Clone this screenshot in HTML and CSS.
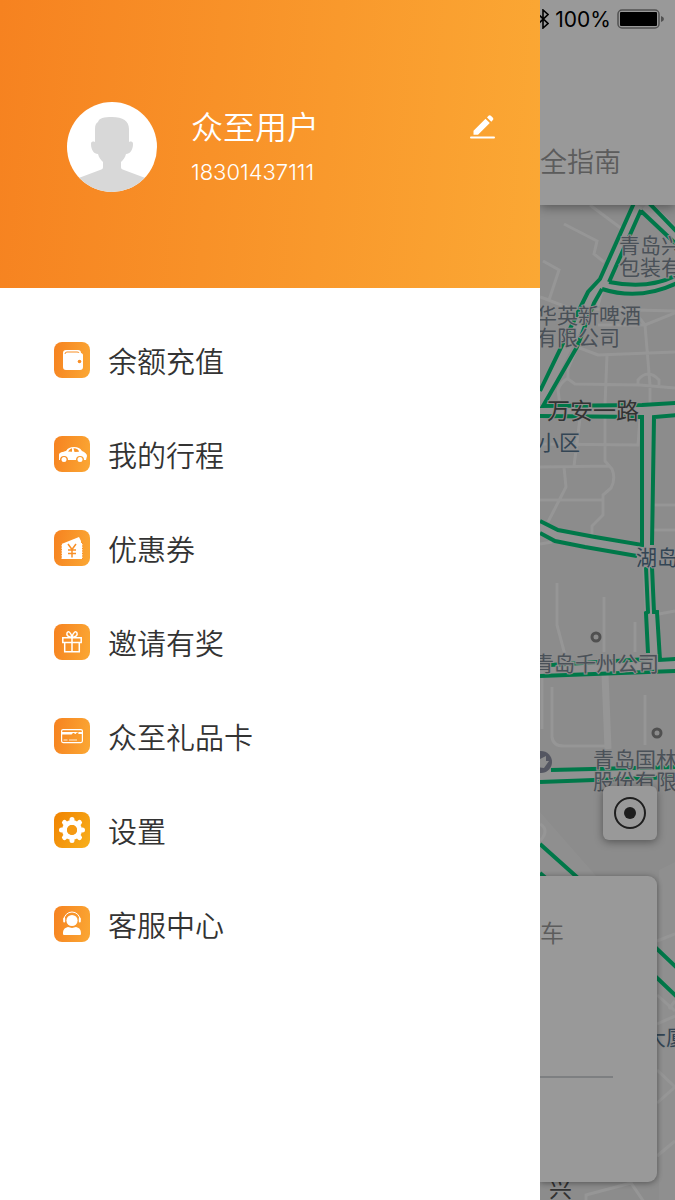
FILE: index.html
```html
<!DOCTYPE html>
<html lang="zh-CN">
<head>
    <meta charset="UTF-8">
    <meta name="viewport" content="width=device-width, initial-scale=1.0">
    <title>众至用户</title>
    <link rel="stylesheet" href="styles.css">
</head>
<body>
    <div class="app">
        <aside class="drawer">
            <header class="profile">
                <svg class="avatar" viewBox="0 0 90 90" aria-hidden="true">
                    <clipPath id="avatarClip"><circle cx="45" cy="45" r="45"/></clipPath>
                    <circle cx="45" cy="45" r="45" fill="#fff"/>
                    <path clip-path="url(#avatarClip)" fill="#d8d8d8" d="M28 40V27c0-4 1-6 3-7 1-4 6-5 14-5 11 0 17 4 17 12v13c3-1 4 0 4 2 0 6-3 10-7 10-1 4-3 6-5 8v5c0 2 1 2 3 3l24 9v14H9V77l24-9c2-1 3-1 3-3v-5c-2-2-4-4-5-8-4 0-7-4-7-10 0-2 1-3 4-2z"/>
                </svg>
                <div class="profile-info">
                    <h1 class="profile-name">众至用户</h1>
                    <p class="profile-phone">18301437111</p>
                </div>
                <button class="edit-btn" type="button" aria-label="编辑">
                    <svg width="26" height="26" viewBox="0 0 26 26" fill="#fff" aria-hidden="true">
                        <path d="M3.500 16.800 15.500 4.800l4.300 4.300L8 20.700H3.500zM17 3.400l1.500-1.600a1.700 1.700 0 0 1 2.400 0l2 2a1.700 1.700 0 0 1 0 2.300l-1.600 1.600z"/>
                        <rect x="0" y="22.500" width="25" height="2" rx="1"/>
                    </svg>
                </button>
            </header>

            <nav class="menu">
                <a class="menu-item" href="#">
                    <svg class="menu-icon" viewBox="0 0 36 36" aria-hidden="true">
                        <path fill="#fff" d="M12 8h12c2 0 3 1 3 3 1 0 2 1 2 2v12a3 3 0 0 1-3 3H12a3 3 0 0 1-3-3V11c0-2 1-3 3-3z"/>
                        <path fill="none" stroke="#f88f26" d="M11 12q0-2 2-2h10q2 0 2 1"/>
                        <circle cx="25.500" cy="19.500" r="1.800" fill="#f88f26"/>
                    </svg>
                    <span>余额充值</span>
                </a>
                <a class="menu-item" href="#">
                    <svg class="menu-icon" viewBox="0 0 36 36" aria-hidden="true">
                        <path fill="#fff" d="M5 19c0-3 4-3 7-4 2-3 4-4 8-4s6 1 8 4c3 1 5 3 5 5l-1 4h-2a4 4 0 0 0-8 0h-8a4 4 0 0 0-8 0H5z"/>
                        <path fill="#f99427" d="M14 15.500q2-3 4-3.200v3.500zM19.500 12.200q5 0 5.500 3.500l-4.500.3z"/>
                        <circle cx="10" cy="23.500" r="2.500" fill="#fff"/>
                        <circle cx="26" cy="23.500" r="2.500" fill="#fff"/>
                    </svg>
                    <span>我的行程</span>
                </a>
                <a class="menu-item" href="#">
                    <svg class="menu-icon" viewBox="0 0 36 36" aria-hidden="true">
                        <path fill="#fff" d="m7.500 14 17.500-7 2 4v2h1.500v16h-21z"/>
                        <path fill="none" stroke="#f99027" stroke-dasharray="1 1.500" d="M7.500 14v15M28.500 13v16"/>
                        <path fill="none" stroke="#f99027" stroke-width="1.500" d="m14 14 4 5.500 4-5.500M18 19v8.500M14 20h8M14 23.500h8"/>
                    </svg>
                    <span>优惠券</span>
                </a>
                <a class="menu-item" href="#">
                    <svg class="menu-icon" viewBox="0 0 36 36" fill="none" stroke="#fff" stroke-width="1.500" aria-hidden="true">
                        <path d="M8.800 13.800h18.400v4.700H8.800zM10.700 18.500v9.300h14.600v-9.300M18 14v14"/>
                        <path d="M18 13.500c-3 0-6-2-5-4.500s4-1 5 4.500c1-5.500 4-7 5-4.500s-2 4.500-5 4.500z"/>
                    </svg>
                    <span>邀请有奖</span>
                </a>
                <a class="menu-item" href="#">
                    <svg class="menu-icon" viewBox="0 0 36 36" aria-hidden="true">
                        <rect x="7.600" y="11.600" width="20.800" height="13" rx="1.500" fill="none" stroke="#fff" stroke-width="1.200"/>
                        <path fill="#fff" d="M8 14h20v2h-4l1-1.500h-2l-1.500 1.500H20l1-1h-2l-1.500 1.500H8z"/>
                        <path stroke="#fff" stroke-width=".8" d="M9.500 22h4M15 22h8"/>
                    </svg>
                    <span>众至礼品卡</span>
                </a>
                <a class="menu-item" href="#">
                    <svg class="menu-icon menu-icon-deep" viewBox="0 0 36 36" aria-hidden="true">
                        <circle cx="18" cy="18" r="7.500" fill="none" stroke="#fff" stroke-width="5"/>
                        <path stroke="#fff" stroke-width="5" stroke-linecap="round" d="M18 8v-.5M18 28v.5M8 18h-.5M28 18h.5M11 11l-.5-.5M25 25l.5.500M11 25l-.5.500M25 11l.5-.5"/>
                        <circle cx="18" cy="18" r="5" fill="#f59a12"/>
                    </svg>
                    <span>设置</span>
                </a>
                <a class="menu-item" href="#">
                    <svg class="menu-icon" viewBox="0 0 36 36" aria-hidden="true">
                        <circle cx="18" cy="14.500" r="5.600" fill="#fff"/>
                        <path fill="none" stroke="#fff" d="M10 14a8 8 0 0 1 16 0"/>
                        <path stroke="#fff" stroke-width="2" stroke-linecap="round" d="M10.200 12.500v3M25.800 12.500v3"/>
                        <path fill="#fff" d="M9 28c0-4 1-6 5-7l4 1 4-1c4 1 5 3 5 7q0 1-1 1H10q-1 0-1-1z"/>
                    </svg>
                    <span>客服中心</span>
                </a>
            </nav>
        </aside>

        <main class="page">
            <div class="topbar">
                <div class="status">
                    <svg class="bluetooth" width="12" height="20" viewBox="0 0 12 20" fill="none" stroke="#000" stroke-width="1.600" aria-hidden="true">
                        <path d="m1 5 10 9.500L6 19V1l5 4.500L1 15"/>
                    </svg>
                    <span>100%</span>
                    <svg width="48" height="20" viewBox="0 0 48 20" aria-hidden="true">
                        <rect x="1" y="1" width="41" height="18" rx="4" fill="none" stroke="#888" stroke-width="1.500"/>
                        <rect x="3" y="3" width="37" height="14" rx="1" fill="#000"/>
                        <path d="M44 7q3 1 3 3t-3 3z" fill="#888"/>
                    </svg>
                </div>
                <span class="tab">全指南</span>
            </div>

            <div class="map">
                <svg class="map-canvas" viewBox="540 205 135 995" preserveAspectRatio="xMinYMin slice">
                    <!-- blocks -->
                    <path fill="#efefef" d="M540 812l57 65h-57zM675 862l-16 8v330h16z"/>
                    <!-- side streets -->
                    <g class="street">
                        <path d="M590 205l32 24M564 224l33 17-3 13 10 8M543 261l16 9-10 30-9-3M540 297l32 12M602 291l-5 18 78 2M598 325l47 0 30-12M645 325l-12-15M645 325l5 60M577 347l21 8 77-3M577 347l-9 22 0 10 7 5 65 1 35 3M638 385v-5q10-12 21 0v5M607 355l-2 50M650 388v15M568 378q-8 5-10 12l2 15M580 418l-6 48M605 418v43l7 8q4 10-1 19l-8 7v20l-11 11v10M540 444l98 1 2-27M540 467l70-1M564 467l2 20-18 35M540 500h64M654 505h21M654 530h21M540 544l12-2M557 583v42l8 30M604 597v55M635 622v30M659 614l16-3M542 675v54M552 687v50q1 9 12 9h45M645 695v50M540 824q10 6 0 17"/>
                        <path d="M657 941l18-7M657 995l18 16M657 1024l18-8M669 1009l6-8M657 1070l18 17-18 16M657 1156l18-15M586 1205v-10l45-12 15 22"/>
                        <path class="street-wide" d="M605 674l3 75"/>
                    </g>
                    <!-- main roads -->
                    <g class="road">
                        <path d="M637 205L604 280 590 298 538 403M646 205l34 32M604 285q38 13 73-6M540 411h92l48-2M648 411l-1 140 3 60 3 20 1 33M540 527l18 8 88 17M540 671l140-6M540 776l140-3"/>
                    </g>
                    <g class="traffic">
                        <path d="M634 203L600 279 588 292 582 304 540 391M641 210L609 282M641 211l36 34M649 203l28 29M609 282q40 8 68-7M602 289q38 12 75-6M602 289l-8 14-17 44-34 59 99-1 35-2M540 416l102 1v128l-47-8-37-7-18-9M677 415l-23 2-2 128M540 533l15 8 30 6 52 9M646 567l2 45-2 1 2 40M652 567l2 45h3l3 48 17-1M550 665l98-6M540 676l137-5M551 770l126-3M540 782l137-5M540 844l38 34M540 873l7 6M655 947l22 21M655 976l22 21"/>
                    </g>
                    <!-- points of interest -->
                    <g fill="#e8e8e8" stroke="#858585" stroke-width="3">
                        <circle cx="596" cy="637" r="4"/>
                        <circle cx="657" cy="733" r="4"/>
                    </g>
                    <circle cx="541" cy="762" r="11" fill="#8c90a2"/>
                    <path d="M535 757l5 2 6-3v5h3l-5 7-9-1z" fill="#e9e9e9"/>
                    <g class="label">
                        <text x="619" y="253">青岛兴</text>
                        <text x="619" y="275">包装有</text>
                        <text x="536" y="323">华英新啤酒</text>
                        <text x="536" y="345">有限公司</text>
                        <text x="533" y="671">青岛千州公司</text>
                        <text x="593" y="767">青岛国林</text>
                        <text x="593" y="789">股份有限</text>
                    </g>
                    <g class="label label-place">
                        <text x="538" y="450">小区</text>
                        <text x="636" y="565">湖岛</text>
                        <text x="645" y="1045">大厦</text>
                    </g>
                    <g class="label label-road">
                        <text x="547" y="419">万安一路</text>
                        <text x="549" y="1197">兴</text>
                    </g>
                </svg>

                <button class="locate" type="button" aria-label="定位">
                    <svg width="34" height="34" viewBox="0 0 34 34" aria-hidden="true">
                        <circle cx="17" cy="17" r="15" fill="none" stroke="#333" stroke-width="2"/>
                        <circle cx="17" cy="17" r="6" fill="#333"/>
                    </svg>
                </button>
                <section class="order">
                    <span class="order-tab">车</span>
                    <hr class="order-line">
                </section>
            </div>
            <div class="mask"></div>
        </main>
    </div>
</body>
</html>
```
FILE: styles.css
```css
* {
    box-sizing: border-box;
}
body {
    margin: 0;
    font-family: "Noto Sans CJK SC", sans-serif;
    color: #333;
    background: #fff;
}
h1, p {
    margin: 0;
}
button {
    padding: 0;
    border: none;
    background: none;
    cursor: pointer;
}
svg {
    display: block;
}
.app {
    display: grid;
    grid-template-columns: 4fr 1fr;
    min-height: 100vh;
}

/* drawer */
.drawer {
    background: #fff;
}
.profile {
    display: flex;
    align-items: flex-start;
    padding: 102px 44px 92px 67px;
    color: #fff;
    background: linear-gradient(95deg, #f68220, #fba834);
}
.avatar {
    width: 90px;
    height: 90px;
}
.profile-info {
    flex: 1;
    padding-left: 34px;
}
.profile-name {
    font-size: 32px;
    font-weight: 350;
    line-height: 46px;
}
.profile-phone {
    font-family: Inter, sans-serif;
    font-size: 22px;
    font-weight: 300;
    line-height: 48px;
}
.edit-btn {
    margin-top: 12px;
}
.menu {
    padding: 25px 54px;
}
.menu-item {
    display: flex;
    align-items: center;
    gap: 18px;
    height: 94px;
    font-size: 29px;
    font-weight: 350;
    color: #333;
    text-decoration: none;
}
.menu-icon {
    width: 36px;
    height: 36px;
    border-radius: 8px;
    background: linear-gradient(100deg, #f68220, #fba834);
}
.menu-icon-deep {
    background: linear-gradient(120deg, #f08200, #f8b01c);
}

/* page under the drawer */
.page {
    position: relative;
    display: flex;
    flex-direction: column;
    min-width: 0;
    overflow: hidden;
}
.topbar {
    position: relative;
    z-index: 1;
    display: flex;
    flex-direction: column;
    align-items: flex-end;
    justify-content: space-between;
    height: 205px;
    padding-bottom: 24px;
    background: #fff;
    box-shadow: 0 2px 10px rgba(0, 0, 0, 0.4);
}
.status {
    display: flex;
    align-items: center;
    gap: 6px;
    height: 38px;
    padding-right: 10px;
    font-family: Inter, sans-serif;
    font-size: 21px;
    color: #000;
}
.tab {
    padding-right: 54px;
    font-size: 27px;
    font-weight: 350;
    line-height: 40px;
    color: #999;
}
.map {
    position: relative;
    flex: 1;
    display: flex;
    flex-direction: column;
    align-items: flex-end;
    justify-content: flex-end;
    gap: 36px;
    padding: 0 18px 18px 0;
    background: #e9e9e9;
}
.map-canvas {
    position: absolute;
    inset: 0;
    width: 100%;
    height: 100%;
}
.street {
    fill: none;
    stroke: #fafafa;
    stroke-width: 3;
}
.street-wide {
    stroke-width: 7;
}
.road {
    fill: none;
    stroke: #f4f4f4;
    stroke-width: 11;
}
.traffic {
    fill: none;
    stroke: #00c87a;
    stroke-width: 4;
}
.label {
    font-size: 21px;
    fill: #7c8793;
    stroke: #ececec;
    stroke-width: 2;
    paint-order: stroke;
}
.label-place {
    fill: #55738c;
}
.label-road {
    font-size: 23px;
    fill: #555;
}
.locate {
    position: relative;
    display: grid;
    place-items: center;
    width: 54px;
    height: 54px;
    border-radius: 6px;
    background: #fff;
    box-shadow: 0 2px 8px rgba(0, 0, 0, 0.4);
}
.order {
    position: relative;
    width: 100%;
    padding: 36px 44px 104px 0;
    border-radius: 0 9px 9px 0;
    background: #fff;
    box-shadow: 0 1px 6px rgba(0, 0, 0, 0.4);
}
.order-tab {
    display: block;
    font-size: 24px;
    font-weight: 350;
    line-height: 40px;
    color: #999;
}
.order-line {
    height: 2px;
    margin: 124px 0 0;
    border: none;
    background: #d0d4d8;
}
.mask {
    position: absolute;
    inset: 0;
    z-index: 2;
    background: rgba(0, 0, 0, 0.4);
}
```
